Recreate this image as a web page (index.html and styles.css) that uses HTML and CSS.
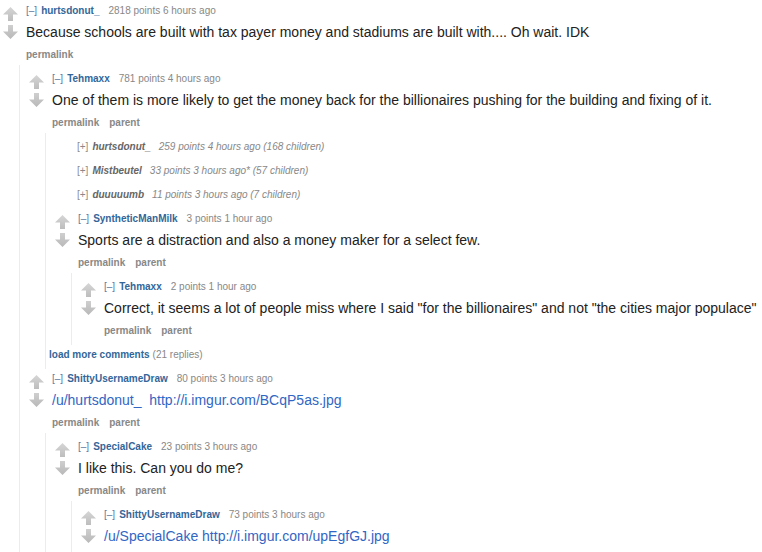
FILE: index.html
```html
<!DOCTYPE html>
<html>
<head>
<meta charset="utf-8">
<link rel="stylesheet" href="styles.css">
</head>
<body>
<svg width="0" height="0" class="defs">
  <defs>
    <linearGradient id="gup" x1="0" y1="0" x2="0" y2="1">
      <stop offset="0" stop-color="#d6d6d6"/>
      <stop offset="1" stop-color="#bdbdbd"/>
    </linearGradient>
    <linearGradient id="gdn" x1="0" y1="0" x2="0" y2="1">
      <stop offset="0" stop-color="#cfcfcf"/>
      <stop offset="1" stop-color="#b8b8b8"/>
    </linearGradient>
    <symbol id="up" viewBox="0 0 15 14"><polygon points="7.5,0 15,7.5 10,7.5 10,14 5,14 5,7.5 0,7.5" fill="url(#gup)"/></symbol>
    <symbol id="down" viewBox="0 0 15 14"><polygon points="5,0 10,0 10,6.5 15,6.5 7.5,14 0,6.5 5,6.5" fill="url(#gdn)"/></symbol>
  </defs>
</svg>
<div class="thread">
  <div class="comment">
    <div class="row">
      <div class="arrows"><svg class="arrow"><use href="#up"/></svg><svg class="arrow"><use href="#down"/></svg></div>
      <div class="entry">
        <p class="tagline"><a class="expand">[–]</a><a class="author">hurtsdonut_</a><span class="score">2818 points 6 hours ago</span></p>
        <div class="md">Because schools are built with tax payer money and stadiums are built with.... Oh wait. IDK</div>
        <ul class="buttons"><li>permalink</li></ul>
      </div>
    </div>
    <div class="child">
      <div class="comment">
        <div class="row">
          <div class="arrows"><svg class="arrow"><use href="#up"/></svg><svg class="arrow"><use href="#down"/></svg></div>
          <div class="entry">
            <p class="tagline"><a class="expand">[–]</a><a class="author">Tehmaxx</a><span class="score">781 points 4 hours ago</span></p>
            <div class="md">One of them is more likely to get the money back for the billionaires pushing for the building and fixing of it.</div>
            <ul class="buttons"><li>permalink</li><li>parent</li></ul>
          </div>
        </div>
        <div class="child">
          <p class="collapsed"><a class="expand">[+]</a><a class="author">hurtsdonut_</a><span class="score">259 points 4 hours ago (168 children)</span></p>
          <p class="collapsed"><a class="expand">[+]</a><a class="author">Mistbeutel</a><span class="score">33 points 3 hours ago* (57 children)</span></p>
          <p class="collapsed"><a class="expand">[+]</a><a class="author">duuuuumb</a><span class="score">11 points 3 hours ago (7 children)</span></p>
          <div class="comment">
            <div class="row">
              <div class="arrows"><svg class="arrow"><use href="#up"/></svg><svg class="arrow"><use href="#down"/></svg></div>
              <div class="entry">
                <p class="tagline"><a class="expand">[–]</a><a class="author">SyntheticManMilk</a><span class="score">3 points 1 hour ago</span></p>
                <div class="md">Sports are a distraction and also a money maker for a select few.</div>
                <ul class="buttons"><li>permalink</li><li>parent</li></ul>
              </div>
            </div>
            <div class="child">
              <div class="comment">
                <div class="row">
                  <div class="arrows"><svg class="arrow"><use href="#up"/></svg><svg class="arrow"><use href="#down"/></svg></div>
                  <div class="entry">
                    <p class="tagline"><a class="expand">[–]</a><a class="author">Tehmaxx</a><span class="score">2 points 1 hour ago</span></p>
                    <div class="md">Correct, it seems a lot of people miss where I said "for the billionaires" and not "the cities major populace"</div>
                    <ul class="buttons"><li>permalink</li><li>parent</li></ul>
                  </div>
                </div>
              </div>
            </div>
          </div>
          <p class="more"><a class="more-link">load more comments</a><span class="gray">(21 replies)</span></p>
        </div>
      </div>
      <div class="comment">
        <div class="row">
          <div class="arrows"><svg class="arrow"><use href="#up"/></svg><svg class="arrow"><use href="#down"/></svg></div>
          <div class="entry">
            <p class="tagline"><a class="expand">[–]</a><a class="author">ShittyUsernameDraw</a><span class="score">80 points 3 hours ago</span></p>
            <div class="md"><a class="link">/u/hurtsdonut_</a>&nbsp; <a class="link">http://i.imgur.com/BCqP5as.jpg</a></div>
            <ul class="buttons"><li>permalink</li><li>parent</li></ul>
          </div>
        </div>
        <div class="child">
          <div class="comment">
            <div class="row">
              <div class="arrows"><svg class="arrow"><use href="#up"/></svg><svg class="arrow"><use href="#down"/></svg></div>
              <div class="entry">
                <p class="tagline"><a class="expand">[–]</a><a class="author">SpecialCake</a><span class="score">23 points 3 hours ago</span></p>
                <div class="md">I like this. Can you do me?</div>
                <ul class="buttons"><li>permalink</li><li>parent</li></ul>
              </div>
            </div>
            <div class="child">
              <div class="comment">
                <div class="row">
                  <div class="arrows"><svg class="arrow"><use href="#up"/></svg><svg class="arrow"><use href="#down"/></svg></div>
                  <div class="entry">
                    <p class="tagline"><a class="expand">[–]</a><a class="author">ShittyUsernameDraw</a><span class="score">73 points 3 hours ago</span></p>
                    <div class="md"><a class="link">/u/SpecialCake</a> <a class="link">http://i.imgur.com/upEgfGJ.jpg</a></div>
                  </div>
                </div>
              </div>
            </div>
          </div>
        </div>
      </div>
    </div>
  </div>
</div>
</body>
</html>
```

FILE: styles.css
```css
html, body {
  margin: 0;
  padding: 0;
  background: #ffffff;
  overflow: hidden;
}
body {
  font-family: "Liberation Sans", Arial, Helvetica, sans-serif;
  color: #222222;
  height: 552px;
}
.defs {
  position: absolute;
  width: 0;
  height: 0;
}
.thread {
  padding-top: 3px;
}
.comment {
  display: flex;
  flex-direction: column;
}
.row {
  display: flex;
}
.arrows {
  display: flex;
  flex-direction: column;
  gap: 4px;
  width: 15px;
  margin-left: 3px;
  padding-top: 4px;
}
.arrow {
  width: 15px;
  height: 14px;
  display: block;
}
.entry {
  margin-left: 8px;
  display: flex;
  flex-direction: column;
}
.tagline, .collapsed, .more {
  margin: 0;
  font-size: 10px;
  line-height: 16px;
  height: 16px;
  white-space: nowrap;
}
.expand {
  color: #6078a0;
  margin-right: 4px;
}
.author {
  color: #336699;
  font-weight: bold;
  margin-right: 9px;
}
.score {
  color: #888888;
}
.md {
  margin-top: 3px;
  font-size: 14px;
  line-height: 20px;
  white-space: nowrap;
  color: #222222;
}
.link {
  color: #3166c4;
}
.buttons {
  list-style: none;
  margin: 5px 0 0 0;
  padding: 0;
  display: flex;
  gap: 10px;
  font-size: 10px;
  line-height: 16px;
  height: 16px;
  font-weight: bold;
  color: #888888;
}
.child {
  display: flex;
  flex-direction: column;
  gap: 8px;
  margin-top: 2px;
  margin-left: 19px;
  padding: 6px 0 6px 6px;
  margin-bottom: -6px;
  border-left: 1px solid #ececec;
}
.collapsed {
  padding-left: 25px;
  font-style: italic;
  color: #888888;
}
.collapsed .expand {
  font-style: normal;
  color: #8a8a8a;
}
.collapsed .author {
  color: #666666;
  margin-right: 8px;
}
.more {
  margin-left: -3px;
}
.more-link {
  color: #336699;
  font-weight: bold;
  margin-right: 3px;
}
.gray {
  color: #888888;
}
```
